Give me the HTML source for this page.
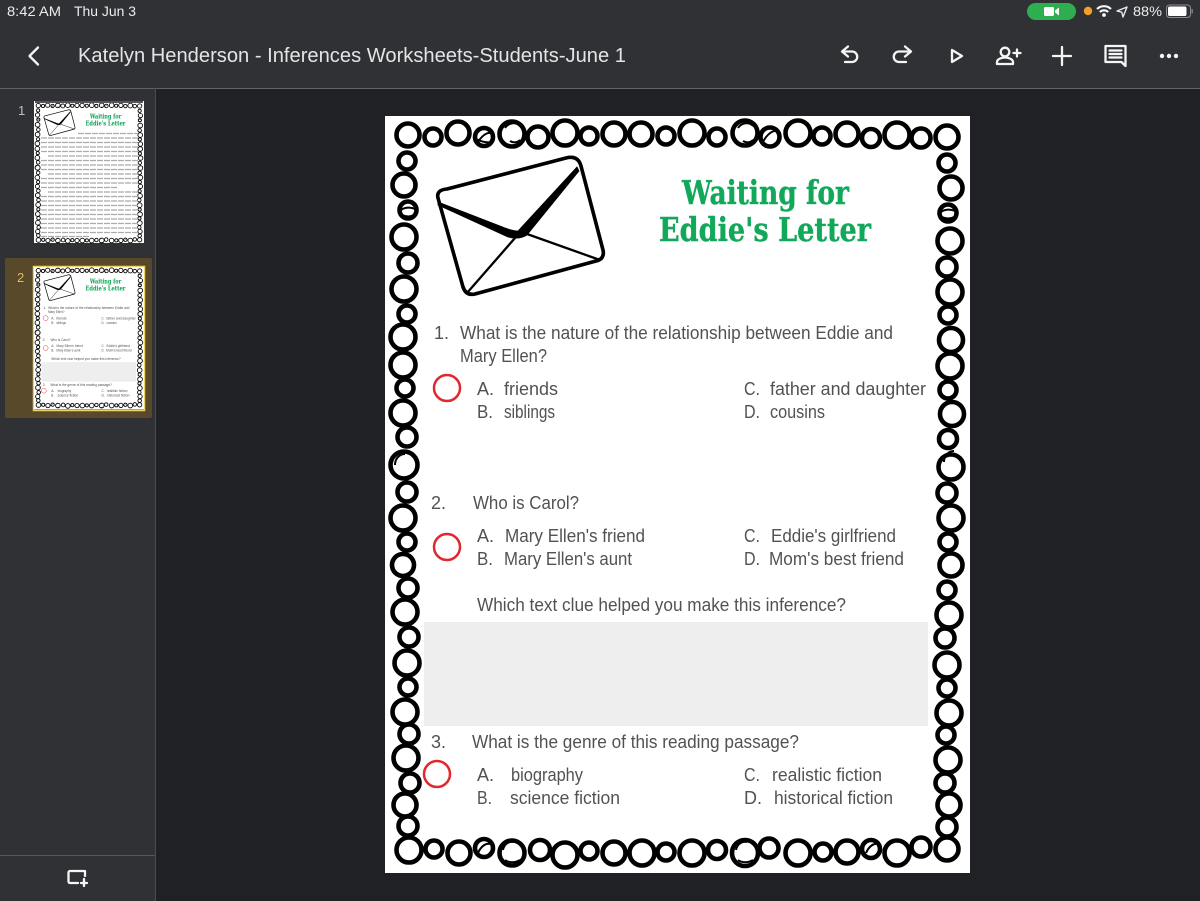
<!DOCTYPE html>
<html lang="en">
<head>
<meta charset="utf-8">
<title>Katelyn Henderson - Inferences Worksheets-Students-June 1</title>
<style>
html,body{margin:0;padding:0;background:#202124;width:1200px;height:901px;overflow:hidden}
svg{display:block}
.ui{font-family:"Liberation Sans",sans-serif}
.q{font-family:"Liberation Sans",sans-serif;font-size:18px;fill:#525252}
.t{font-family:"DejaVu Serif","Liberation Serif",serif;font-weight:bold;font-size:33px;fill:#12a85a}
.ic{fill:none;stroke:#f4f5f5;stroke-width:2.300;stroke-linecap:round;stroke-linejoin:round}
</style>
</head>
<body>
<svg width="1200" height="901" viewBox="0 0 1200 901" xmlns="http://www.w3.org/2000/svg">
<defs>
<g id="frame">
<g fill="none" stroke="#000" stroke-width="4.600">
<circle cx="408" cy="135" r="11.500"/><circle cx="433" cy="137" r="8.500"/><circle cx="458" cy="133" r="11.500"/><circle cx="484" cy="137" r="9"/><circle cx="512" cy="134" r="12.500"/><circle cx="538" cy="137" r="10.500"/><circle cx="565" cy="133" r="12.500"/><circle cx="589" cy="136" r="8.500"/><circle cx="614" cy="134" r="11.500"/><circle cx="641" cy="134" r="11.500"/><circle cx="666" cy="136" r="8.500"/><circle cx="692" cy="133" r="12.500"/><circle cx="717" cy="137" r="8.500"/><circle cx="745" cy="133" r="12.500"/><circle cx="770" cy="137" r="9.500"/><circle cx="798" cy="133" r="12.500"/><circle cx="822" cy="136" r="8.500"/><circle cx="847" cy="134" r="11.500"/><circle cx="871" cy="138" r="9"/><circle cx="897" cy="135" r="12.500"/><circle cx="921" cy="138" r="9.500"/><circle cx="947" cy="137" r="11.500"/>
<circle cx="407" cy="161" r="8.500"/><circle cx="404" cy="185" r="11.500"/><circle cx="408" cy="210" r="8.500"/><circle cx="404" cy="237" r="12.500"/><circle cx="408" cy="263" r="9.500"/><circle cx="404" cy="289" r="12.500"/><circle cx="407" cy="314" r="8.500"/><circle cx="403" cy="337" r="12.500"/><circle cx="403" cy="365" r="12.500"/><circle cx="405" cy="388" r="8.500"/><circle cx="403" cy="413" r="12.500"/><circle cx="407" cy="437" r="9.500"/><circle cx="404" cy="465" r="13.500"/><circle cx="407" cy="492" r="9.500"/><circle cx="403" cy="518" r="12.500"/><circle cx="407" cy="542" r="8.500"/><circle cx="403" cy="565" r="11"/><circle cx="408" cy="588" r="9.500"/><circle cx="405" cy="612" r="12.500"/><circle cx="409" cy="637" r="9.500"/><circle cx="407" cy="663" r="12.500"/><circle cx="408" cy="687" r="8.500"/><circle cx="405" cy="712" r="12.500"/><circle cx="409" cy="734" r="9.500"/><circle cx="406" cy="758" r="12.500"/><circle cx="410" cy="783" r="9.500"/><circle cx="405" cy="805" r="11.500"/><circle cx="408" cy="826" r="9.500"/><circle cx="409" cy="850" r="12.500"/>
<circle cx="434" cy="849" r="8.500"/><circle cx="459" cy="853" r="11.500"/><circle cx="484" cy="848" r="9"/><circle cx="512" cy="853" r="12.500"/><circle cx="540" cy="850" r="10"/><circle cx="565" cy="855" r="12.500"/><circle cx="589" cy="851" r="8.500"/><circle cx="614" cy="853" r="11.500"/><circle cx="642" cy="853" r="12.500"/><circle cx="666" cy="852" r="8.500"/><circle cx="692" cy="853" r="12.500"/><circle cx="717" cy="850" r="9"/><circle cx="745" cy="853" r="13"/><circle cx="769" cy="848" r="9.500"/><circle cx="798" cy="853" r="12.500"/><circle cx="823" cy="852" r="8.500"/><circle cx="847" cy="852" r="11.500"/><circle cx="871" cy="849" r="9"/><circle cx="897" cy="853" r="12.500"/><circle cx="921" cy="847" r="9.500"/><circle cx="947" cy="849" r="11.500"/>
<circle cx="947" cy="163" r="8.500"/><circle cx="951" cy="188" r="11.500"/><circle cx="948" cy="213" r="8.500"/><circle cx="950" cy="241" r="12.500"/><circle cx="947" cy="267" r="9.500"/><circle cx="950" cy="292" r="12.500"/><circle cx="948" cy="315" r="8.500"/><circle cx="951" cy="340" r="12"/><circle cx="950" cy="366" r="12.500"/><circle cx="948" cy="390" r="8.500"/><circle cx="952" cy="414" r="12"/><circle cx="948" cy="439" r="9"/><circle cx="951" cy="467" r="12.500"/><circle cx="947" cy="493" r="9.500"/><circle cx="951" cy="518" r="12.500"/><circle cx="948" cy="542" r="8.500"/><circle cx="951" cy="565" r="11.500"/><circle cx="947" cy="590" r="8.500"/><circle cx="949" cy="615" r="12.500"/><circle cx="945" cy="638" r="9.500"/><circle cx="947" cy="665" r="12.500"/><circle cx="947" cy="688" r="8.500"/><circle cx="949" cy="713" r="12.500"/><circle cx="946" cy="735" r="8.500"/><circle cx="948" cy="760" r="12.500"/><circle cx="945" cy="783" r="9.500"/><circle cx="949" cy="805" r="11.500"/><circle cx="947" cy="827" r="9.500"/>
</g>
<g fill="none" stroke="#000" stroke-width="2">
<path d="M477 144c4-8 10-12 14-11M476 139c6 3 11 4 16 3"/><path d="M505 128c4-6 12-6 15-2M510 141c3 2 7 2 10-1"/><path d="M738 128c4-6 12-6 15-2M743 141c3 2 7 2 10-1"/><path d="M763 142c4-8 10-12 14-11"/><path d="M401 210c4-3 10-3 14-1M402 215c4 2 9 2 12 0"/><path d="M395 465c0-7 5-11 10-11M398 476c3 2 8 2 11 0"/><path d="M941 212c4-3 10-3 14-1M942 217c4 2 9 2 12 0"/><path d="M944 462c0-7 5-11 10-11"/><path d="M478 853c3-7 8-10 12-9"/><path d="M505 860c4 3 10 3 15 0M503 850c1-6 6-9 11-8"/><path d="M738 860c4 3 10 3 15 0M736 850c1-6 6-9 11-8"/><path d="M866 853c3-7 8-10 12-9"/>
</g>
<path d="M447 189L566 158Q578 155 581 166L603 250Q605 259 596 261L475 294Q466 296 463 287L438 198Q436 190 447 189Z" fill="#fff" stroke="#000" stroke-width="3.600" stroke-linejoin="round"/>
<path d="M438 202L500 226Q512 231 518 231L577 167 579 171 527 235Q519 240 508 237L438 205Z" fill="#000" stroke="#000" stroke-width=".8"/>
<path d="M467 293L515 238M527 234L600 260" fill="none" stroke="#000" stroke-width="2.300"/>
<text class="t" x="682" y="204" textLength="167" lengthAdjust="spacingAndGlyphs" stroke="#12a85a" stroke-width=".4">Waiting for</text>
<text class="t" x="659" y="241" textLength="212" lengthAdjust="spacingAndGlyphs" stroke="#12a85a" stroke-width=".4">Eddie's Letter</text>
</g>
<g id="slide">
<rect x="385" y="116" width="585" height="757" fill="#fff"/>
<use href="#frame"/>
<rect x="424" y="622" width="504" height="104" fill="#eeeeee"/>
<g fill="none" stroke="#e0282e" stroke-width="2.500"><circle cx="447" cy="388" r="13"/><circle cx="447" cy="547" r="13"/><circle cx="437" cy="774" r="13"/></g>
<g class="q">
<text x="434" y="339">1.</text>
<text x="460" y="339" textLength="433" lengthAdjust="spacingAndGlyphs">What is the nature of the relationship between Eddie and</text>
<text x="460" y="362" textLength="87" lengthAdjust="spacingAndGlyphs">Mary Ellen?</text>
<text x="477" y="395" textLength="17" lengthAdjust="spacingAndGlyphs">A.</text><text x="504" y="395" textLength="54" lengthAdjust="spacingAndGlyphs">friends</text>
<text x="477" y="418" textLength="16" lengthAdjust="spacingAndGlyphs">B.</text><text x="504" y="418" textLength="51" lengthAdjust="spacingAndGlyphs">siblings</text>
<text x="744" y="395" textLength="16" lengthAdjust="spacingAndGlyphs">C.</text><text x="770" y="395" textLength="156" lengthAdjust="spacingAndGlyphs">father and daughter</text>
<text x="744" y="418" textLength="16" lengthAdjust="spacingAndGlyphs">D.</text><text x="770" y="418" textLength="55" lengthAdjust="spacingAndGlyphs">cousins</text>
<text x="431" y="509">2.</text>
<text x="473" y="509" textLength="106" lengthAdjust="spacingAndGlyphs">Who is Carol?</text>
<text x="477" y="542" textLength="17" lengthAdjust="spacingAndGlyphs">A.</text><text x="505" y="542" textLength="140" lengthAdjust="spacingAndGlyphs">Mary Ellen's friend</text>
<text x="477" y="565" textLength="16" lengthAdjust="spacingAndGlyphs">B.</text><text x="504" y="565" textLength="128" lengthAdjust="spacingAndGlyphs">Mary Ellen's aunt</text>
<text x="744" y="542" textLength="16" lengthAdjust="spacingAndGlyphs">C.</text><text x="771" y="542" textLength="125" lengthAdjust="spacingAndGlyphs">Eddie's girlfriend</text>
<text x="744" y="565" textLength="16" lengthAdjust="spacingAndGlyphs">D.</text><text x="769" y="565" textLength="135" lengthAdjust="spacingAndGlyphs">Mom's best friend</text>
<text x="477" y="611" textLength="369" lengthAdjust="spacingAndGlyphs">Which text clue helped you make this inference?</text>
<text x="431" y="748">3.</text>
<text x="472" y="748" textLength="327" lengthAdjust="spacingAndGlyphs">What is the genre of this reading passage?</text>
<text x="477" y="781" textLength="17" lengthAdjust="spacingAndGlyphs">A.</text><text x="511" y="781" textLength="72" lengthAdjust="spacingAndGlyphs">biography</text>
<text x="477" y="804" textLength="15" lengthAdjust="spacingAndGlyphs">B.</text><text x="510" y="804" textLength="110" lengthAdjust="spacingAndGlyphs">science fiction</text>
<text x="744" y="781" textLength="16" lengthAdjust="spacingAndGlyphs">C.</text><text x="772" y="781" textLength="110" lengthAdjust="spacingAndGlyphs">realistic fiction</text>
<text x="744" y="804">D.</text><text x="774" y="804" textLength="119" lengthAdjust="spacingAndGlyphs">historical fiction</text>
</g>
</g>
</defs>

<rect width="1200" height="901" fill="#202124"/>
<rect width="1200" height="88" fill="#303134"/>
<rect y="88" width="155" height="813" fill="#303134"/>
<rect y="88" width="1200" height="1" fill="#5f6368"/>
<rect x="155" y="88" width="1" height="813" fill="#4a4c50"/>
<rect y="855" width="155" height="1" fill="#55575b"/>

<!-- status bar -->
<g class="ui" fill="#eceded" font-size="13.500">
<text x="7" y="16" textLength="54" lengthAdjust="spacingAndGlyphs">8:42 AM</text>
<text x="74" y="16" textLength="62" lengthAdjust="spacingAndGlyphs">Thu Jun 3</text>
<text x="1133" y="16" textLength="29" lengthAdjust="spacingAndGlyphs">88%</text>
</g>
<rect x="1027" y="3" width="49" height="17" rx="8.500" fill="#2eae4f"/>
<rect x="1044" y="7" width="10" height="9" rx="1.500" fill="#fff"/>
<path d="M1055 10.500l4-3v8l-4-3z" fill="#fff"/>
<circle cx="1088" cy="11" r="4.200" fill="#f5a024"/>
<path d="M1097 9a10 10 0 0 1 14 0M1099.800 12a6.200 6.200 0 0 1 8.400 0" fill="none" stroke="#f6f6f6" stroke-width="2.100"/>
<circle cx="1104" cy="15" r="1.900" fill="#f6f6f6"/>
<path d="M1117 11l10-4-4 10-1.200-4.800z" fill="none" stroke="#e8eaed" stroke-width="1.400" stroke-linejoin="round"/>
<rect x="1166.500" y="5" width="24" height="12.500" rx="3" fill="none" stroke="#8b8d90" stroke-width="1"/>
<rect x="1168" y="6.500" width="18.500" height="9.500" rx="1.800" fill="#fff"/>
<rect x="1191.500" y="9" width="1.300" height="4.500" rx=".6" fill="#8b8d90"/>

<!-- toolbar -->
<path class="ic" d="M38 47.500L29.500 56 38 64.500" stroke-width="2.400"/>
<text class="ui" x="78" y="62" font-size="20" fill="#e3e4e6" textLength="548" lengthAdjust="spacingAndGlyphs">Katelyn Henderson - Inferences Worksheets-Students-June 1</text>
<path class="ic" d="M848 46.500l-6 5 6 5M842 51.500h10a5.200 5.200 0 0 1 0 10.500h-7"/>
<path class="ic" d="M905 46.500l6 5-6 5M911 51.500h-12a5.200 5.200 0 0 0 0 10.500h7"/>
<path class="ic" d="M952 50v12l10-6z"/>
<circle class="ic" cx="1005" cy="52" r="4.300"/>
<path class="ic" d="M997 64v-2c0-3 5-4.500 8-4.500s8 1.500 8 4.500v2zM1017 49.500v7M1013.500 53h7"/>
<path class="ic" d="M1062 47v18M1053 56h18"/>
<path class="ic" d="M1105.500 46h20v20l-4-4h-16zM1109.500 50.500h12M1109.500 54h12M1109.500 57.500h12"/>
<circle cx="1162" cy="56" r="2.200" fill="#f4f5f5"/><circle cx="1169" cy="56" r="2.200" fill="#f4f5f5"/><circle cx="1176" cy="56" r="2.200" fill="#f4f5f5"/>

<!-- sidebar -->
<rect x="5" y="258" width="147" height="160" rx="2" fill="#57492a"/>
<text class="ui" x="18" y="115" font-size="13" fill="#bdc1c6">1</text>
<text class="ui" x="17" y="282" font-size="13" fill="#dcbb62">2</text>

<rect x="34" y="101" width="110" height="142" fill="#fff"/>
<g transform="translate(34,102) scale(.188) translate(-385,-116)"><use href="#frame"/></g>
<rect x="35" y="101" width="108" height="2" fill="#555"/>
<path d="M78 133.500H138M41 138H138M41 142.500H138M41 147H138M41 151.500H138M48 156H138M41 160.500H138M41 165H138M41 169.500H138M48 174H138M41 178.500H138M41 183H138M41 187.500H118M48 192H138M41 196.500H138M41 201H138M41 205.500H138M41 210H138M41 214.500H138M41 219H138M41 223.500H138M41 228H138M41 232.500H138M41 236.500H90" stroke="#ababab" stroke-width="1.200" stroke-dasharray="6 1" fill="none"/>

<rect x="33.500" y="266.500" width="111" height="144" fill="none" stroke="#ecd468" stroke-width="1.500"/>
<g transform="translate(34,267) scale(.188) translate(-385,-116)"><use href="#slide"/></g>

<path class="ic" d="M84 871H70a1.500 1.500 0 0 0-1.500 1.500v9a1.500 1.500 0 0 0 1.500 1.500h8M85 871v5M84 879v7M81 883h6" stroke-linecap="butt"/>

<!-- main slide -->
<use href="#slide"/>
</svg>
</body>
</html>
